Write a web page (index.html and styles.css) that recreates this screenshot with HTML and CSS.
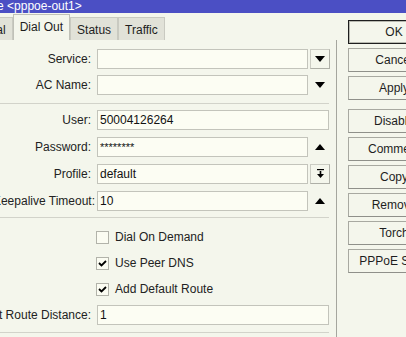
FILE: index.html
```html
<!DOCTYPE html>
<html>
<head>
<meta charset="utf-8">
<link rel="stylesheet" href="styles.css">
</head>
<body>
<div class="titlebar"><span class="title-text">Interface &lt;pppoe-out1&gt;</span></div>
<div class="main">
  <div class="left">
    <div class="tabs">
      <div class="tab tab-first">General</div>
      <div class="tab active">Dial Out</div>
      <div class="tab">Status</div>
      <div class="tab">Traffic</div>
    </div>
    <div class="panel">
      <div class="row">
        <div class="lbl">Service:</div>
        <div class="field"></div>
        <div class="ibtn boxed"><svg width="10" height="6" viewBox="0 0 10 6"><polygon points="0,0 10,0 5,6" fill="#000"/></svg></div>
      </div>
      <div class="row">
        <div class="lbl">AC Name:</div>
        <div class="field"></div>
        <div class="ibtn"><svg width="10" height="6" viewBox="0 0 10 6"><polygon points="0,0 10,0 5,6" fill="#000"/></svg></div>
      </div>
      <div class="sep sep1"></div>
      <div class="group">
        <div class="row">
          <div class="lbl">User:</div>
          <div class="field wide">50004126264</div>
        </div>
        <div class="row">
          <div class="lbl">Password:</div>
          <div class="field pw">********</div>
          <div class="ibtn"><svg width="10" height="6" viewBox="0 0 10 6"><polygon points="0,6 10,6 5,0" fill="#000"/></svg></div>
        </div>
        <div class="row">
          <div class="lbl">Profile:</div>
          <div class="field">default</div>
          <div class="ibtn boxed"><svg width="9" height="10" viewBox="0 0 9 10"><rect x="1" y="0" width="7" height="1.2" fill="#000"/><rect x="3.7" y="2" width="1.6" height="4" fill="#000"/><polygon points="1,5 8,5 4.5,9" fill="#000"/></svg></div>
        </div>
        <div class="row">
          <div class="lbl lbl-tight">Keepalive Timeout:</div>
          <div class="field">10</div>
          <div class="ibtn"><svg width="10" height="6" viewBox="0 0 10 6"><polygon points="0,6 10,6 5,0" fill="#000"/></svg></div>
        </div>
      </div>
      <div class="sep sep2"></div>
      <div class="group2">
        <div class="row">
          <div class="cb"></div><span class="cbl">Dial On Demand</span>
        </div>
        <div class="row">
          <div class="cb"><svg width="11" height="11" viewBox="0 0 11 11"><polyline points="2,5 4.5,7.5 9,3" fill="none" stroke="#000" stroke-width="1.8"/></svg></div><span class="cbl">Use Peer DNS</span>
        </div>
        <div class="row">
          <div class="cb"><svg width="11" height="11" viewBox="0 0 11 11"><polyline points="2,5 4.5,7.5 9,3" fill="none" stroke="#000" stroke-width="1.8"/></svg></div><span class="cbl">Add Default Route</span>
        </div>
        <div class="row">
          <div class="lbl">Default Route Distance:</div>
          <div class="field wide">1</div>
        </div>
      </div>
      <div class="sep sep3"></div>
    </div>
  </div>
  <div class="side">
    <div class="btn ok">OK</div>
    <div class="btn">Cancel</div>
    <div class="btn gapafter">Apply</div>
    <div class="btn">Disable</div>
    <div class="btn">Comment</div>
    <div class="btn">Copy</div>
    <div class="btn">Remove</div>
    <div class="btn">Torch</div>
    <div class="btn">PPPoE Scan</div>
  </div>
</div>
</body>
</html>
```
FILE: styles.css
```css
html, body {
  margin: 0;
  padding: 0;
}
body {
  width: 406px;
  height: 337px;
  overflow: hidden;
  background: #f4f6ec;
  font-family: "Liberation Sans", Arial, sans-serif;
  font-size: 12px;
  color: #1e1e1e;
}
.titlebar {
  height: 13px;
  background: #4b4fc4;
  color: #fff;
  line-height: 12px;
  white-space: nowrap;
  overflow: hidden;
}
.title-text {
  display: inline-block;
  margin-left: -43px;
}
.main {
  display: flex;
  height: 324px;
}
.left {
  width: 337px;
  flex: none;
  display: flex;
  flex-direction: column;
}
.tabs {
  height: 27px;
  display: flex;
  align-items: flex-end;
  margin-left: -44px;
  flex: none;
}
.tab {
  height: 23px;
  box-sizing: border-box;
  padding: 0 6px;
  border: 1px solid #c9cac1;
  border-bottom: none;
  background: #e1e2d8;
  line-height: 24px;
  white-space: nowrap;
}
.tab.active {
  height: 26px;
  background: #f4f6ec;
  line-height: 25px;
  border-color: #c0c1b8;
}
.panel {
  flex: 1;
  box-sizing: border-box;
  border-right: 1px solid #a5a69e;
  padding: 9px 7px 0 0;
  display: flex;
  flex-direction: column;
  gap: 6px;
}
.group, .group2 {
  display: flex;
  flex-direction: column;
  gap: 7px;
}
.group2 {
  gap: 6px;
}
.row {
  height: 20px;
  display: flex;
  align-items: center;
}
.lbl {
  width: 91px;
  flex: none;
  display: flex;
  justify-content: flex-end;
  white-space: nowrap;
  margin-right: 6px;
  color: #222;
}
.lbl.lbl-tight {
  width: 95px;
  margin-right: 2px;
}
.field {
  width: 211px;
  height: 20px;
  box-sizing: border-box;
  flex: none;
  border: 1px solid #c3c4bb;
  background: #fcfdf3;
  padding-left: 2px;
  line-height: 18px;
  color: #111;
  white-space: nowrap;
}
.field.wide {
  width: 232px;
}
.field.pw {
  font-size: 11px;
}
.ibtn {
  width: 20px;
  height: 20px;
  box-sizing: border-box;
  margin-left: 2px;
  display: flex;
  align-items: center;
  justify-content: center;
  flex: none;
}
.ibtn.boxed {
  border: 1px solid #cbccc3;
  border-right-color: #aeafa7;
  border-bottom-color: #aeafa7;
}
.sep {
  height: 0;
  width: 329px;
  border-top: 1px solid #d2d3ca;
  flex: none;
}
.sep1 {
  margin-top: 2px;
}
.sep2 {
  margin-top: 0;
  margin-bottom: 3px;
}
.sep3 {
  margin-top: 1px;
}
.cb {
  width: 13px;
  height: 13px;
  box-sizing: border-box;
  margin-left: 96px;
  border: 1px solid #b2b3aa;
  background: #fbfcf2;
  display: flex;
  align-items: center;
  justify-content: center;
  flex: none;
}
.cbl {
  margin-left: 6px;
  white-space: nowrap;
  color: #222;
}
.side {
  flex: 1;
  padding: 7px 0 0 11px;
  display: flex;
  flex-direction: column;
  gap: 4px;
  overflow: hidden;
}
.btn {
  width: 92px;
  height: 24px;
  box-sizing: border-box;
  flex: none;
  border: 1px solid #a8a9a1;
  border-right-color: #8f908a;
  border-bottom-color: #8f908a;
  background: #f4f6ec;
  text-align: center;
  line-height: 22px;
  white-space: nowrap;
  color: #1e1e1e;
}
.btn.ok {
  border: 1px solid #1e1e1e;
  box-shadow: inset 0 0 0 1px #b8b9b0;
}
.btn.gapafter {
  margin-bottom: 5px;
}
```
